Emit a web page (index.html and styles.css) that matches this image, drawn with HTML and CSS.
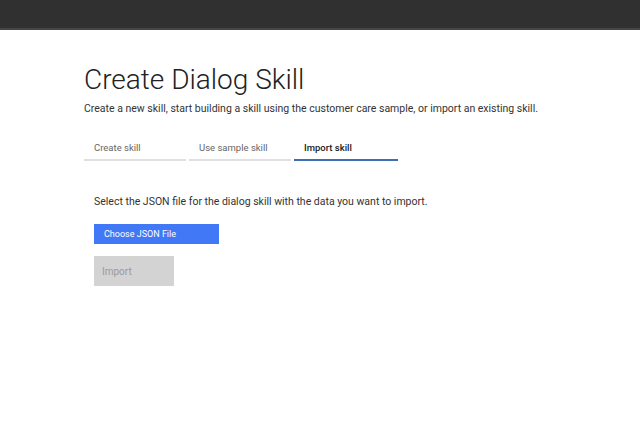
FILE: index.html
```html
<!DOCTYPE html>
<html>
<head>
<meta charset="utf-8">
<link rel="stylesheet" href="styles.css">
</head>
<body>
<header class="topbar"></header>
<main class="page">
  <h1 class="title">Create Dialog Skill</h1>
  <p class="subtitle">Create a new skill, start building a skill using the customer care sample, or import an existing skill.</p>
  <nav class="tabs">
    <div class="tab">Create skill</div>
    <div class="tab">Use sample skill</div>
    <div class="tab active">Import skill</div>
  </nav>
  <section class="panel">
    <p class="hint">Select the JSON file for the dialog skill with the data you want to import.</p>
    <button class="btn-choose">Choose JSON File</button>
    <button class="btn-import">Import</button>
  </section>
</main>
</body>
</html>
```
FILE: styles.css
```css
html, body { margin: 0; padding: 0; background: #fff; }
body { font-family: Roboto, "Noto Sans", sans-serif; color: #3d3d3d; }
.topbar { height: 28px; background: #303030; border-bottom: 2px solid #464646; }
.page { padding: 32px 0 0 84px; }
.title { margin: 0; font-family: Roboto, sans-serif; font-weight: 300; font-size: 28px; line-height: 36px; color: #222; }
.subtitle { margin: 3px 0 0; font-size: 10.5px; line-height: 16px; color: #333; }
.tabs { display: flex; gap: 3px; margin-top: 23px; }
.tab { width: 92px; padding: 0 0 3px 10px; font-size: 9.5px; line-height: 16px; color: #666; border-bottom: 2px solid #e0e0e0; }
.tab.active { color: #1a1a1a; font-weight: 500; border-bottom-color: #3d70b2; width: 94px; }
.panel { padding: 33px 0 0 10px; display: flex; flex-direction: column; align-items: flex-start; }
.hint { margin: 0; font-size: 10.5px; line-height: 16px; color: #333; }
.btn-choose { margin-top: 14px; width: 125px; height: 20px; border: 0; background: #4178f5; color: #fff; font-family: Roboto, sans-serif; font-size: 9px; text-align: left; padding: 0 0 0 10px; }
.btn-import { margin-top: 12px; width: 80px; height: 30px; border: 0; background: #d3d3d3; color: #9a9a9a; font-family: Roboto, sans-serif; font-size: 10px; text-align: left; padding: 0 0 0 8px; }
```
